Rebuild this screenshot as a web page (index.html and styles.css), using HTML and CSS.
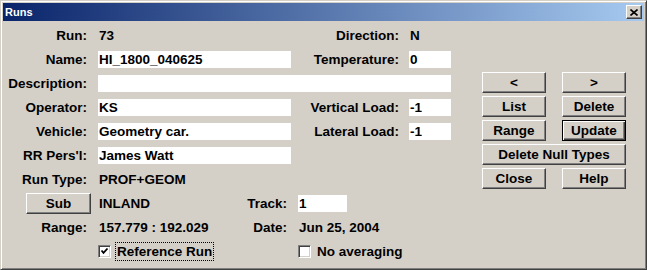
FILE: index.html
```html
<!DOCTYPE html>
<html lang="en">
<head>
    <meta charset="UTF-8">
    <title>Runs</title>
    <link rel="stylesheet" href="styles.css">
</head>
<body>
    <div class="window">
        <div class="titlebar">
            <span class="title">Runs</span>
            <button class="close-btn" aria-label="Close">
                <svg width="8" height="7" viewBox="0 0 8 7"><path d="M0.5 0.5 L7.5 6.5 M7.5 0.5 L0.5 6.5" stroke="#000" stroke-width="1.6" fill="none"/></svg>
            </button>
        </div>

        <div class="client">
            <div class="form">
                <span class="lbl first">Run:</span>
                <span class="val">73</span>
                <span class="lbl">Direction:</span>
                <span class="val">N</span>

                <span class="lbl first">Name:</span>
                <input class="field" type="text" value="HI_1800_040625">
                <span class="lbl">Temperature:</span>
                <input class="field" type="text" value="0">

                <span class="lbl first">Description:</span>
                <input class="field wide" type="text" value="">

                <span class="lbl first">Operator:</span>
                <input class="field" type="text" value="KS">
                <span class="lbl">Vertical Load:</span>
                <input class="field" type="text" value="-1">

                <span class="lbl first">Vehicle:</span>
                <input class="field" type="text" value="Geometry car.">
                <span class="lbl">Lateral Load:</span>
                <input class="field" type="text" value="-1">

                <span class="lbl first">RR Pers'l:</span>
                <input class="field" type="text" value="James Watt">

                <span class="lbl first">Run Type:</span>
                <span class="val">PROF+GEOM</span>

                <button class="btn sub-btn">Sub</button>
                <div class="split">
                    <span class="val">INLAND</span>
                    <span class="lbl">Track:</span>
                    <input class="field track" type="text" value="1">
                </div>

                <span class="lbl first">Range:</span>
                <div class="split">
                    <span class="val">157.779 : 192.029</span>
                    <span class="lbl">Date:</span>
                    <span class="val">Jun 25, 2004</span>
                </div>

                <div class="split checks">
                    <label class="check focus">
                        <span class="box"><svg width="9" height="9" viewBox="0 0 9 9"><path d="M1.5 3.5 L3.5 5.8 L7.5 1.5" stroke="#000" stroke-width="1.8" fill="none"/></svg></span>
                        <span class="check-text">Reference Run</span>
                    </label>
                    <label class="check">
                        <span class="box"></span>
                        <span class="check-text">No averaging</span>
                    </label>
                </div>
            </div>

            <div class="buttons">
                <button class="btn">&lt;</button>
                <button class="btn">&gt;</button>
                <button class="btn">List</button>
                <button class="btn">Delete</button>
                <button class="btn">Range</button>
                <button class="btn default">Update</button>
                <button class="btn full">Delete Null Types</button>
                <button class="btn">Close</button>
                <button class="btn">Help</button>
            </div>
        </div>
    </div>
</body>
</html>
```

FILE: styles.css
```css
/* page */
body {
    margin: 0;
    background: #d4d0c8;
    font-family: 'Liberation Sans', Arial, sans-serif;
}

/* window frame */
.window {
    width: 647px;
    height: 270px;
    box-sizing: border-box;
    background: #d4d0c8;
    border: 1px solid;
    border-color: #d4d0c8 #404040 #404040 #d4d0c8;
    box-shadow: inset 1px 1px #ffffff, inset -1px -1px #808080;
    padding: 2px;
}

.titlebar {
    height: 18px;
    display: flex;
    align-items: center;
    justify-content: space-between;
    background: linear-gradient(90deg, #0a246a, #a6caf0);
    padding: 0 2px;
}

.title {
    color: #fff;
    font-size: 11px;
    font-weight: bold;
}

.close-btn {
    width: 16px;
    height: 14px;
    padding: 0;
    display: flex;
    align-items: center;
    justify-content: center;
    background: #d4d0c8;
    border: 1px solid;
    border-color: #ffffff #404040 #404040 #ffffff;
    box-shadow: inset -1px -1px #808080;
}

/* client area */
.client {
    display: flex;
    align-items: flex-start;
    padding-top: 2px;
    margin-left: -1px;
}

.form {
    display: grid;
    grid-template-columns: 96px 193px 118px 42px;
    grid-auto-rows: 24px;
    align-items: center;
    font-size: 13.5px;
    font-weight: bold;
    color: #000;
    white-space: nowrap;
}

.lbl {
    text-align: right;
    padding-right: 10px;
}

.first {
    grid-column: 1;
}

.lbl.first {
    padding-right: 11px;
}

.val {
    padding-left: 1px;
}

.field {
    height: 17px;
    width: 100%;
    box-sizing: border-box;
    border: none;
    background: #fff;
    padding: 0 1px;
    margin: 0;
    font: inherit;
    color: #000;
    outline: none;
}

.field.wide {
    grid-column: 2 / 5;
}

.field.track {
    width: 49px;
}

/* Sub / Track, Range / Date, checkboxes */
.split {
    grid-column: 2 / 5;
    display: grid;
    grid-template-columns: 140px 60px 1fr;
    align-items: center;
}

.split .lbl {
    padding-right: 11px;
}

.checks {
    grid-template-columns: 200px 1fr;
}

.check {
    display: flex;
    align-items: center;
    gap: 5px;
}

.box {
    width: 13px;
    height: 13px;
    box-sizing: border-box;
    background: #fff;
    border: 1px solid;
    border-color: #808080 #ffffff #ffffff #808080;
    box-shadow: inset 1px 1px #404040, inset -1px -1px #d4d0c8;
    display: flex;
    align-items: center;
    justify-content: center;
}

.check-text {
    padding: 1px 1px;
    outline: 1px dotted transparent;
}

.focus .check-text {
    outline-color: #000;
}

/* buttons */
.btn {
    height: 21px;
    padding: 0;
    background: #d4d0c8;
    border: 1px solid;
    border-color: #ffffff #404040 #404040 #ffffff;
    box-shadow: inset -1px -1px #808080;
    font-family: inherit;
    font-size: 13.5px;
    font-weight: bold;
    color: #000;
}

.btn.default {
    border-color: #000;
    box-shadow: inset 1px 1px #ffffff, inset -1px -1px #404040, inset -2px -2px #808080;
}

.sub-btn {
    grid-column: 1;
    width: 65px;
    justify-self: end;
    margin-right: 7px;
}

.buttons {
    display: grid;
    grid-template-columns: 64px 64px;
    column-gap: 16px;
    row-gap: 3px;
    margin-left: 31px;
    margin-top: 49px;
}

.btn.full {
    grid-column: 1 / 3;
}
```
